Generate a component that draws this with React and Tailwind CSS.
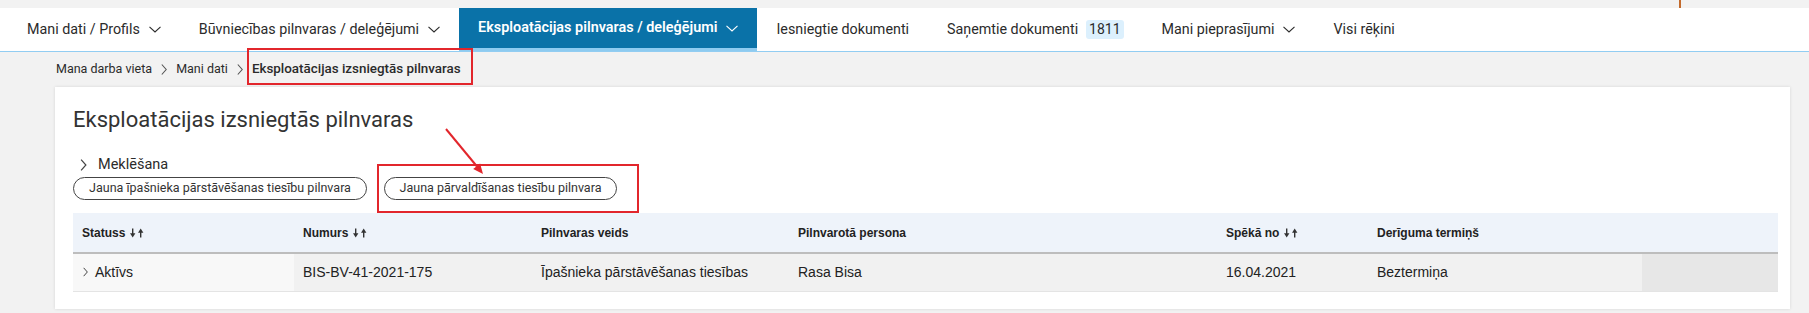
import React from 'react';

const navItems = [
  { label: 'Mani dati / Profils', menu: true },
  { label: 'Būvniecības pilnvaras / deleģējumi', menu: true },
  { label: 'Eksploatācijas pilnvaras / deleģējumi', menu: true, active: true },
  { label: 'Iesniegtie dokumenti' },
  { label: 'Saņemtie dokumenti', badge: '1811' },
  { label: 'Mani pieprasījumi', menu: true },
  { label: 'Visi rēķini' },
];

const columns = [
  { label: 'Statuss', sort: true, w: 'w-[221px]' },
  { label: 'Numurs', sort: true, w: 'w-[238px]' },
  { label: 'Pilnvaras veids', w: 'w-[257px]' },
  { label: 'Pilnvarotā persona', w: 'w-[428px]' },
  { label: 'Spēkā no', sort: true, w: 'w-[151px]' },
  { label: 'Derīguma termiņš', w: 'w-[274px]' },
  { label: '', w: 'w-[136px]' },
];

function ChevronDown({ className }) {
  return (
    <svg viewBox="0 0 12 7" className={className} fill="none" stroke="currentColor" strokeWidth="1.1">
      <path d="M0.5 0.8 6 6 11.5 0.8" />
    </svg>
  );
}

function ChevronRight({ className }) {
  return (
    <svg viewBox="0 0 6 11" className={className} fill="none" stroke="currentColor" strokeWidth="1.1">
      <path d="M0.8 0.5 5.2 5.5 0.8 10.5" />
    </svg>
  );
}

function SortArrows() {
  return (
    <svg viewBox="0 0 14 10" className="ml-[5px] inline-block h-[10px] w-[14px] align-[-1px]" fill="#333">
      <rect x="2" y="0.5" width="1.4" height="6" />
      <polygon points="0,5.2 5.4,5.2 2.7,9.5" />
      <rect x="10" y="3.5" width="1.4" height="6" />
      <polygon points="8,4.8 13.4,4.8 10.7,0.5" />
    </svg>
  );
}

function NavItem({ item }) {
  return (
    <a
      href="#"
      className={
        item.active
          ? 'flex items-center gap-[9px] px-[19px] bg-[#0a72a8] text-[14.4px] text-white font-semibold border-b-[3px] border-[#8ecbf0]'
          : 'flex items-center gap-[9px] px-[19px] text-[14.3px] text-[#2b2b2b]'
      }
    >
      <span>{item.label}</span>
      {item.menu && <ChevronDown className="h-[7px] w-[12px]" />}
      {item.badge && (
        <span className="-ml-px rounded-[3px] bg-[#dcf0fd] px-[3px] text-[14px] leading-[19px] text-[#2b2b2b]">{item.badge}</span>
      )}
    </a>
  );
}

export default function App() {
  return (
    <div className="relative min-h-[313px] bg-[#f2f2f2] font-['Roboto','Liberation_Sans',sans-serif] text-[14px] text-[#2b2b2b]">
      <div className="flex h-2">
        <div className="ml-[1679px] h-2 w-[2px] bg-[#c36a2c]" />
      </div>

      <nav className="flex h-[44px] border-b border-[#92cdf2] bg-white pl-2">
        {navItems.map((item) => (
          <NavItem key={item.label} item={item} />
        ))}
      </nav>

      <div className="flex h-[35px] items-center pl-[56px] text-[12.5px]">
        <span>Mana darba vieta</span>
        <ChevronRight className="mx-[9px] h-[11px] w-[6px] text-[#555]" />
        <span>Mani dati</span>
        <ChevronRight className="mx-[9px] h-[11px] w-[6px] text-[#555]" />
        <span className="text-[13.4px] font-medium">Eksploatācijas izsniegtās pilnvaras</span>
      </div>

      <div className="ml-[55px] mr-[19px] bg-white px-[18px] pb-[17px] pt-[20px] shadow-[0_0_3px_rgba(0,0,0,0.12)]">
        <h1 className="text-[22px] leading-[26px] text-[#333]">Eksploatācijas izsniegtās pilnvaras</h1>

        <div className="mt-[22px] flex h-[20px] items-center gap-[11px] pl-[7px] text-[14.5px]">
          <ChevronRight className="h-[12px] w-[7px] text-[#444]" />
          <span>Meklēšana</span>
        </div>

        <div className="mt-[2px] flex gap-[17px] text-[12.5px]">
          <button className="flex h-[23px] w-[294px] items-center justify-center rounded-full border border-[#444] text-[#333]">
            Jauna īpašnieka pārstāvēšanas tiesību pilnvara
          </button>
          <button className="flex h-[23px] w-[233px] items-center justify-center rounded-full border border-[#444] text-[#333]">
            Jauna pārvaldīšanas tiesību pilnvara
          </button>
        </div>

        <table className="mt-[13px] w-full table-fixed border-collapse font-['Liberation_Sans',Arial,sans-serif]">
          <colgroup>
            {columns.map((c, i) => (
              <col key={i} className={c.w} />
            ))}
          </colgroup>
          <thead>
            <tr className="bg-[#eef3fa]">
              {columns.map((c, i) => (
                <th key={i} className="h-[40px] border-b-2 border-[#bdbdbd] pl-[9px] text-left text-[12px] font-bold text-[#222]">
                  {c.label}
                  {c.sort && <SortArrows />}
                </th>
              ))}
            </tr>
          </thead>
          <tbody>
            <tr className="text-[14px] text-[#222]">
              <td className="h-[38px] border-b border-[#e4e4e4] bg-[#f8f8f8] pl-[10px]">
                <span className="flex items-center gap-[7px]">
                  <ChevronRight className="h-[12px] w-[5px] text-[#333]" />
                  Aktīvs
                </span>
              </td>
              <td className="border-b border-[#e4e4e4] bg-[#f1f1f1] pl-[9px]">BIS-BV-41-2021-175</td>
              <td className="border-b border-[#e4e4e4] bg-[#f1f1f1] pl-[9px]">Īpašnieka pārstāvēšanas tiesības</td>
              <td className="border-b border-[#e4e4e4] bg-[#f1f1f1] pl-[9px]">Rasa Bisa</td>
              <td className="border-b border-[#e4e4e4] bg-[#f1f1f1] pl-[9px]">16.04.2021</td>
              <td className="border-b border-[#e4e4e4] bg-[#f1f1f1] pl-[9px]">Beztermiņa</td>
              <td className="border-b border-[#e4e4e4] bg-[#e7e7e7]" />
            </tr>
          </tbody>
        </table>
      </div>

      {/* annotation overlays */}
      <div className="pointer-events-none absolute left-[247px] top-[48px] h-[37px] w-[226px] border-2 border-[#e2262c]" />
      <div className="pointer-events-none absolute left-[377px] top-[164px] h-[49px] w-[262px] border-2 border-[#e2262c]" />
      <svg className="pointer-events-none absolute left-[440px] top-[125px]" width="50" height="55" viewBox="0 0 50 55">
        <line x1="6" y1="4" x2="37" y2="41.5" stroke="#e2262c" strokeWidth="2" />
        <polygon points="43,49 33.2,44.1 40.1,38.4" fill="#e2262c" />
      </svg>
    </div>
  );
}
